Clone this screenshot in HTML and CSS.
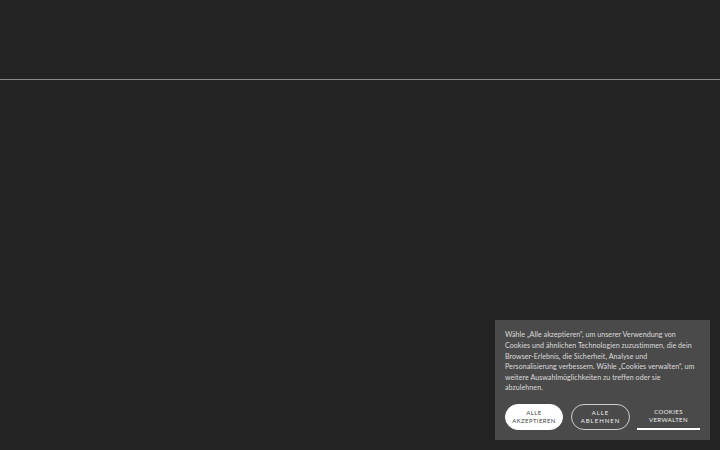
FILE: index.html
```html
<!DOCTYPE html>
<html lang="de">
<head>
<meta charset="utf-8">
<title>Cookies</title>
<link rel="stylesheet" href="styles.css">
</head>
<body>
<header class="topbar"></header>
<main class="content"></main>
<div class="cookie-panel">
  <p class="cookie-text">Wähle „Alle akzeptieren“, um unserer Verwendung von<br>Cookies und ähnlichen Technologien zuzustimmen, die dein<br>Browser-Erlebnis, die Sicherheit, Analyse und<br>Personalisierung verbessern. Wähle „Cookies verwalten“, um<br>weitere Auswahlmöglichkeiten zu treffen oder sie<br>abzulehnen.</p>
  <div class="cookie-actions">
    <button class="btn btn-accept">ALLE<br>AKZEPTIEREN</button>
    <button class="btn btn-reject">ALLE<br>ABLEHNEN</button>
    <button class="btn btn-manage">COOKIES<br>VERWALTEN</button>
  </div>
</div>
</body>
</html>
```
FILE: styles.css
```css
html, body {
  margin: 0;
  padding: 0;
  height: 100%;
  background: #232323;
  font-family: "Lato", "Noto Sans", sans-serif;
}
.topbar {
  height: 79px;
  border-bottom: 1px solid #8a8a8a;
  background: #232323;
}
.cookie-panel {
  position: fixed;
  right: 10px;
  bottom: 10px;
  width: 195px;
  padding: 10px;
  background: #4a4a4a;
  color: #dcdcdc;
}
.cookie-text {
  margin: 0;
  font-size: 7.1px;
  line-height: 10.6px;
  letter-spacing: 0.05px;
  white-space: nowrap;
}
.cookie-actions {
  display: flex;
  align-items: center;
  gap: 8px;
  margin-top: 10px;
}
.btn {
  font-family: "Lato", "Noto Sans", sans-serif;
  font-size: 6px;
  line-height: 8px;
  letter-spacing: 0.4px;
  text-transform: uppercase;
  border: 1px solid #ffffff;
  border-radius: 14px;
  height: 26px;
  padding: 0;
  cursor: pointer;
}
.btn-accept {
  width: 58px;
  background: #ffffff;
  color: #444;
}
.btn-reject {
  width: 59px;
  background: transparent;
  color: #f0f0f0;
  border-color: #cfcfcf;
  letter-spacing: 1px;
}
.btn-manage {
  width: 63px;
  margin-left: -1px;
  background: transparent;
  color: #f0f0f0;
  border: none;
  border-bottom: 2px solid #ffffff;
  border-radius: 0;
}
```
